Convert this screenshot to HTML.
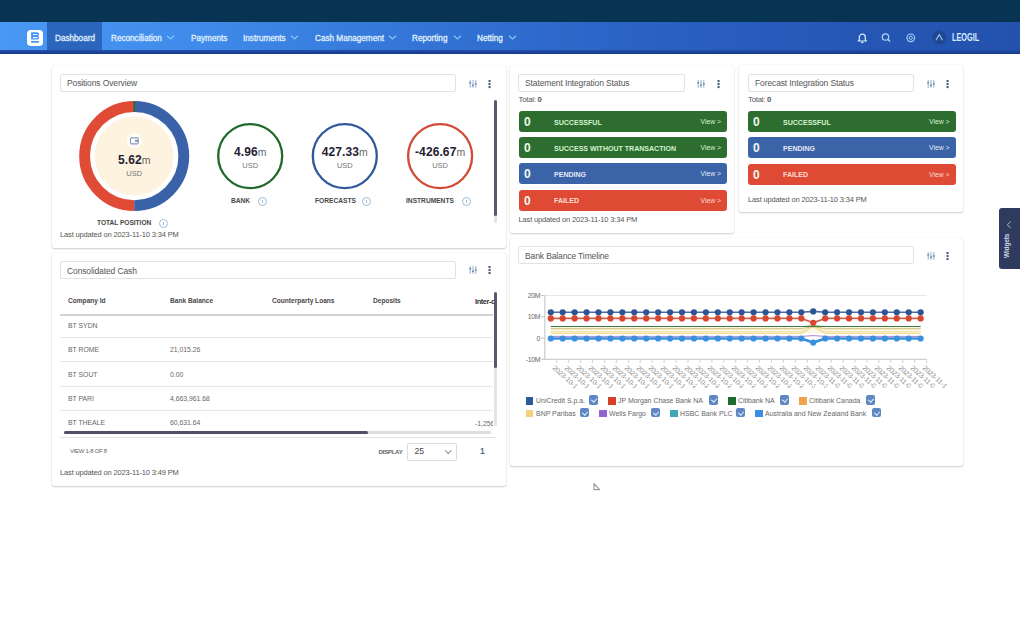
<!DOCTYPE html><html><head><meta charset="utf-8"><style>
*{box-sizing:border-box;margin:0;padding:0}
html,body{width:1020px;height:638px;overflow:hidden;background:#fff;font-family:"Liberation Sans",sans-serif;color:#333}
.abs{position:absolute;white-space:nowrap}
#topbar{position:absolute;left:0;top:0;width:1020px;height:22px;background:#073452}
#nav{position:absolute;left:0;top:22px;width:1020px;height:28px;background:linear-gradient(90deg,#4898f4 0%,#3f8aea 20%,#3171d2 45%,#2a60c2 65%,#2556b4 85%,#2352ae 100%)}
#navline{position:absolute;left:0;top:50px;width:1020px;height:3.8px;background:linear-gradient(180deg,#2350a8,#15398a)}
.nv{position:absolute;top:2px;height:28px;line-height:28px;font-size:9.5px;color:#e2f2ff;-webkit-text-stroke:0.3px #e2f2ff;white-space:nowrap;transform:scaleX(0.86);transform-origin:0 0}
.chev{position:absolute;top:11px;width:4px;height:4px;border-right:1px solid #9dc8f2;border-bottom:1px solid #9dc8f2;transform:rotate(45deg)}
.card{position:absolute;background:#fff;border-radius:2px;box-shadow:0 1px 2px rgba(0,0,0,0.18),0 0 1px rgba(0,0,0,0.16)}
.tbox{position:absolute;border:1px solid #e2e2e2;border-radius:2px;background:#fff;font-size:8.5px;color:#555;padding-left:6px;white-space:nowrap;letter-spacing:-0.12px;height:18px;line-height:16px}
.keb{position:absolute;width:2px;height:9px}
.keb i{display:block;width:2px;height:2px;background:#3b4d6b;margin-bottom:1.3px}
.bar{position:absolute;height:21px;border-radius:3px;color:#d4f3d0}
.bar .n{position:absolute;left:5px;top:1px;line-height:21px;font-size:12px;font-weight:bold;color:#eef9ee}
.bar .l{position:absolute;left:35px;top:0.5px;line-height:21px;font-size:8px;font-weight:bold;transform:scaleX(0.88);transform-origin:0 0}
.bar .v{position:absolute;right:6px;top:0;line-height:21px;font-size:6.8px}
.g{background:#2d6e30}
.b{background:#3b63a8;color:#e3e9f6}
.r{background:#de4a33;color:#fcdcd4}
.small{position:absolute;font-size:7.5px;color:#555;white-space:nowrap;letter-spacing:-0.15px}
.val{position:absolute;text-align:center;white-space:nowrap;color:#1f2233}
.val b{font-size:12px;letter-spacing:0.1px}
.val s{text-decoration:none;font-size:10.5px;color:#666}
.usd{position:absolute;font-size:7.5px;color:#777;text-align:center}
.lab{position:absolute;font-size:7.8px;font-weight:bold;color:#474747;white-space:nowrap;transform:scaleX(0.85);transform-origin:0 0;margin-top:-1.1px}
.info{position:absolute;width:9px;height:9px;margin:-0.5px 0 0 -0.5px;border:1px solid #9dbcd8;border-radius:50%}
.info:after{content:"";position:absolute;left:3px;top:2.5px;width:1px;height:3px;background:#9dbcd8}
.th{position:absolute;font-size:7.4px;font-weight:bold;color:#484848;white-space:nowrap;transform:scaleX(0.89);transform-origin:0 0}
.td{position:absolute;font-size:7.6px;color:#666;white-space:nowrap;transform:scaleX(0.9);transform-origin:0 0}
.hr{position:absolute;height:1px;background:#e6e6e6}
.leg{position:absolute;font-size:7.6px;color:#666;white-space:nowrap;transform:scaleX(0.915);transform-origin:0 0}
.sw{position:absolute;width:8px;height:8px}
.cb{position:absolute;width:9.2px;height:9.4px;border-radius:2px;background:#5e87c4}
.cb:after{content:"";position:absolute;left:3.3px;top:1.8px;width:2.6px;height:4.2px;border-right:1.6px solid #eef4ff;border-bottom:1.6px solid #eef4ff;transform:rotate(40deg)}
</style></head><body>
<div id="topbar"></div>
<div id="nav">
<div class="abs" style="left:27px;top:8px;width:16px;height:16px;background:#fff;border-radius:4px"></div>
<svg class="abs" style="left:27px;top:8px" width="16" height="16" viewBox="0 0 16 16"><path fill-rule="evenodd" fill="#4796f0" d="M4.1 2.2H10.2A1.9 1.9 0 0 1 11 5.8A2 2 0 0 1 10.2 9.6H4.1ZM6 3.9H9.7A0.6 0.6 0 0 1 9.7 5.1H6ZM6 7H10.2A0.6 0.6 0 0 1 10.2 8.2H6Z"/><rect x="4.1" y="11" width="7.9" height="1.7" fill="#4796f0"/></svg>
<div class="abs" style="left:47px;top:0;width:55px;height:28px;background:#2c66bc"></div>
<div class="nv" style="left:55px">Dashboard</div>
<div class="nv" style="left:110.5px">Reconciliation</div>
<svg class="abs" style="left:165.8px;top:13px" width="9" height="5" viewBox="0 0 9 5"><path d="M1 0.8l3.5 3.2 3.5-3.2" fill="none" stroke="#86c6f8" stroke-width="1.2"/></svg>
<div class="nv" style="left:191px">Payments</div>
<div class="nv" style="left:243px">Instruments</div>
<svg class="abs" style="left:290.3px;top:13px" width="9" height="5" viewBox="0 0 9 5"><path d="M1 0.8l3.5 3.2 3.5-3.2" fill="none" stroke="#86c6f8" stroke-width="1.2"/></svg>
<div class="nv" style="left:315px">Cash Management</div>
<svg class="abs" style="left:387.6px;top:13px" width="9" height="5" viewBox="0 0 9 5"><path d="M1 0.8l3.5 3.2 3.5-3.2" fill="none" stroke="#86c6f8" stroke-width="1.2"/></svg>
<div class="nv" style="left:412px">Reporting</div>
<svg class="abs" style="left:452.6px;top:13px" width="9" height="5" viewBox="0 0 9 5"><path d="M1 0.8l3.5 3.2 3.5-3.2" fill="none" stroke="#86c6f8" stroke-width="1.2"/></svg>
<div class="nv" style="left:477px">Netting</div>
<svg class="abs" style="left:507.8px;top:13px" width="9" height="5" viewBox="0 0 9 5"><path d="M1 0.8l3.5 3.2 3.5-3.2" fill="none" stroke="#86c6f8" stroke-width="1.2"/></svg>
<svg class="abs" style="left:855px;top:8px" width="130" height="16" viewBox="0 0 130 16"><path d="M4.3 10V7.2a3 3 0 0 1 6 0V10l1 1H3.3z" fill="none" stroke="#dcefff" stroke-width="1.2" stroke-linejoin="round"/><path d="M6.2 12.5h2.2" stroke="#dcefff" stroke-width="1.3"/><circle cx="30.5" cy="7" r="3.2" fill="none" stroke="#a9d0f5" stroke-width="1.3"/><path d="M32.8 9.3l2.2 2.2" stroke="#a9d0f5" stroke-width="1.4"/><circle cx="55.8" cy="7.8" r="3.8" fill="none" stroke="#a9d0f5" stroke-width="1.2"/><circle cx="55.8" cy="7.8" r="1.6" fill="none" stroke="#a9d0f5" stroke-width="1"/><circle cx="84.2" cy="7.6" r="7" fill="#1f4792"/><path d="M80.9 10.2l3.3-5.6 3.3 5.6" fill="none" stroke="#9cc4ec" stroke-width="1.1"/></svg>
<div class="nv" style="left:952px;top:2.3px;font-size:10.2px;font-weight:bold;transform:scaleX(0.72);color:#d9eeff;-webkit-text-stroke:0">LEOGIL</div>
</div><div id="navline"></div>
<div class="card" style="left:52px;top:66px;width:454px;height:182px"></div>
<div class="tbox" style="left:60px;top:74px;width:396px">Positions Overview</div>
<svg class="abs" style="left:468.5px;top:80px" width="8" height="8" viewBox="0 0 8 8"><g stroke="#86a4c2" stroke-width="0.9"><path d="M1.2 0v7.8M4 0v7.8M6.8 0v7.8"/></g><g fill="#6f8fb2"><rect x="0.2" y="2" width="2" height="1.5"/><rect x="3" y="4.6" width="2" height="1.5"/><rect x="5.8" y="3.2" width="2" height="1.5"/></g></svg>
<svg class="abs" style="left:488.0px;top:80px" width="3" height="9" viewBox="0 0 3 9"><g fill="#4b5f7a"><rect x="0.5" y="0" width="2.1" height="2.1"/><rect x="0.5" y="3" width="2.1" height="2.1"/><rect x="0.5" y="6" width="2.1" height="2.1"/></g></svg>
<div class="abs" style="left:494px;top:99.5px;width:3px;height:123px;background:#e4e4e8;border-radius:1.5px"></div>
<div class="abs" style="left:494px;top:99.5px;width:3px;height:116px;background:#585870;border-radius:1.5px"></div>
<svg class="abs" style="left:0;top:0" width="520" height="250" viewBox="0 0 520 250"><circle cx="134.2" cy="156.1" r="39.5" fill="#fdf3df"/><path d="M134.2 106.5 A49.6 49.6 0 0 0 134.2 205.7" fill="none" stroke="#df4b34" stroke-width="10.8"/><path d="M134.2 205.7 A49.6 49.6 0 0 0 134.2 106.5" fill="none" stroke="#3a62a8" stroke-width="10.8"/><rect x="133.39999999999998" y="101.1" width="1.8" height="10.8" fill="#2b6a3a"/><circle cx="250.2" cy="156.1" r="32" fill="none" stroke="#23692c" stroke-width="2.3"/><circle cx="344.8" cy="156.1" r="32" fill="none" stroke="#30599b" stroke-width="2.3"/><circle cx="440.1" cy="156.1" r="32" fill="none" stroke="#d14b36" stroke-width="2.3"/><circle cx="134.4" cy="140.8" r="7.5" fill="#fffdf8"/><rect x="130.5" y="137.9" width="7.8" height="6" rx="1.1" fill="#fff" stroke="#8499b8" stroke-width="1.1"/><rect x="134.9" y="139.9" width="3.4" height="2" fill="#8499b8"/></svg>
<div class="val" style="left:94.19999999999999px;width:80px;top:153px;line-height:12px"><b>5.62</b><s>m</s></div>
<div class="usd" style="left:104.2px;width:60px;top:169px">USD</div>
<div class="val" style="left:210.2px;width:80px;top:145px;line-height:12px"><b>4.96</b><s>m</s></div>
<div class="usd" style="left:220.2px;width:60px;top:161px">USD</div>
<div class="val" style="left:304.8px;width:80px;top:145px;line-height:12px"><b>427.33</b><s>m</s></div>
<div class="usd" style="left:314.8px;width:60px;top:161px">USD</div>
<div class="val" style="left:400.1px;width:80px;top:145px;line-height:12px"><b>-426.67</b><s>m</s></div>
<div class="usd" style="left:410.1px;width:60px;top:161px">USD</div>
<div class="lab" style="left:96.5px;top:219.5px;letter-spacing:-0.05px">TOTAL POSITION</div><div class="info" style="left:159.7px;top:219px"></div>
<div class="lab" style="left:231px;top:197.5px">BANK</div><div class="info" style="left:258px;top:197.3px"></div>
<div class="lab" style="left:315px;top:197.5px">FORECASTS</div><div class="info" style="left:362.2px;top:197.3px"></div>
<div class="lab" style="left:405.5px;top:197.5px">INSTRUMENTS</div><div class="info" style="left:462.2px;top:197.3px"></div>
<div class="small" style="left:60px;top:230px">Last updated on 2023-11-10 3:34 PM</div>
<div class="card" style="left:510px;top:66px;width:224px;height:167px"></div>
<div class="tbox" style="left:518px;top:74px;width:167px">Statement Integration Status</div>
<svg class="abs" style="left:697px;top:80px" width="8" height="8" viewBox="0 0 8 8"><g stroke="#86a4c2" stroke-width="0.9"><path d="M1.2 0v7.8M4 0v7.8M6.8 0v7.8"/></g><g fill="#6f8fb2"><rect x="0.2" y="2" width="2" height="1.5"/><rect x="3" y="4.6" width="2" height="1.5"/><rect x="5.8" y="3.2" width="2" height="1.5"/></g></svg>
<svg class="abs" style="left:717.0px;top:80px" width="3" height="9" viewBox="0 0 3 9"><g fill="#4b5f7a"><rect x="0.5" y="0" width="2.1" height="2.1"/><rect x="0.5" y="3" width="2.1" height="2.1"/><rect x="0.5" y="6" width="2.1" height="2.1"/></g></svg>
<div class="small" style="left:518.5px;top:95px;font-size:7.8px;letter-spacing:-0.25px">Total: <b>0</b></div>
<div class="bar g" style="left:519px;top:111.0px;width:208px"><span class="n">0</span><span class="l">SUCCESSFUL</span><span class="v">View &gt;</span></div>
<div class="bar g" style="left:519px;top:137.2px;width:208px"><span class="n">0</span><span class="l">SUCCESS WITHOUT TRANSACTION</span><span class="v">View &gt;</span></div>
<div class="bar b" style="left:519px;top:163.4px;width:208px"><span class="n">0</span><span class="l">PENDING</span><span class="v">View &gt;</span></div>
<div class="bar r" style="left:519px;top:189.6px;width:208px"><span class="n">0</span><span class="l">FAILED</span><span class="v">View &gt;</span></div>
<div class="small" style="left:518.5px;top:214.5px">Last updated on 2023-11-10 3:34 PM</div>
<div class="card" style="left:739px;top:65px;width:224px;height:147px"></div>
<div class="tbox" style="left:748px;top:74px;width:166px">Forecast Integration Status</div>
<svg class="abs" style="left:926.5px;top:80px" width="8" height="8" viewBox="0 0 8 8"><g stroke="#86a4c2" stroke-width="0.9"><path d="M1.2 0v7.8M4 0v7.8M6.8 0v7.8"/></g><g fill="#6f8fb2"><rect x="0.2" y="2" width="2" height="1.5"/><rect x="3" y="4.6" width="2" height="1.5"/><rect x="5.8" y="3.2" width="2" height="1.5"/></g></svg>
<svg class="abs" style="left:946.0px;top:80px" width="3" height="9" viewBox="0 0 3 9"><g fill="#4b5f7a"><rect x="0.5" y="0" width="2.1" height="2.1"/><rect x="0.5" y="3" width="2.1" height="2.1"/><rect x="0.5" y="6" width="2.1" height="2.1"/></g></svg>
<div class="small" style="left:748px;top:95px;font-size:7.8px;letter-spacing:-0.25px">Total: <b>0</b></div>
<div class="bar g" style="left:748px;top:111.0px;width:207.5px"><span class="n">0</span><span class="l">SUCCESSFUL</span><span class="v">View &gt;</span></div>
<div class="bar b" style="left:748px;top:137.3px;width:207.5px"><span class="n">0</span><span class="l">PENDING</span><span class="v">View &gt;</span></div>
<div class="bar r" style="left:748px;top:163.6px;width:207.5px"><span class="n">0</span><span class="l">FAILED</span><span class="v">View &gt;</span></div>
<div class="small" style="left:748px;top:194.5px">Last updated on 2023-11-10 3:34 PM</div>
<div class="card" style="left:52px;top:253px;width:454px;height:233px"></div>
<div class="tbox" style="left:60px;top:261.4px;width:396px;height:17.5px;line-height:18.2px">Consolidated Cash</div>
<svg class="abs" style="left:468.5px;top:266px" width="8" height="8" viewBox="0 0 8 8"><g stroke="#86a4c2" stroke-width="0.9"><path d="M1.2 0v7.8M4 0v7.8M6.8 0v7.8"/></g><g fill="#6f8fb2"><rect x="0.2" y="2" width="2" height="1.5"/><rect x="3" y="4.6" width="2" height="1.5"/><rect x="5.8" y="3.2" width="2" height="1.5"/></g></svg>
<svg class="abs" style="left:488.0px;top:266px" width="3" height="9" viewBox="0 0 3 9"><g fill="#4b5f7a"><rect x="0.5" y="0" width="2.1" height="2.1"/><rect x="0.5" y="3" width="2.1" height="2.1"/><rect x="0.5" y="6" width="2.1" height="2.1"/></g></svg>
<div class="th" style="left:68px;top:296px">Company Id</div>
<div class="th" style="left:170px;top:296px">Bank Balance</div>
<div class="th" style="left:271.8px;top:296px">Counterparty Loans</div>
<div class="th" style="left:373.2px;top:296px">Deposits</div>
<div class="abs" style="left:475px;top:296.5px;width:19px;overflow:hidden;font-size:7.5px;font-weight:bold;color:#333;letter-spacing:-0.45px">Inter-co</div>
<div class="abs" style="left:60px;top:313.5px;width:433px;height:2px;background:#d2d2d2"></div>
<div class="td" style="left:68px;top:321.0px">BT SYDN</div>
<div class="hr" style="left:60px;top:337.0px;width:433px"></div>
<div class="td" style="left:68px;top:345.4px">BT ROME</div>
<div class="td" style="left:170px;top:345.4px">21,015.26</div>
<div class="hr" style="left:60px;top:361.4px;width:433px"></div>
<div class="td" style="left:68px;top:369.7px">BT SOUT</div>
<div class="td" style="left:170px;top:369.7px">0.00</div>
<div class="hr" style="left:60px;top:385.7px;width:433px"></div>
<div class="td" style="left:68px;top:394.1px">BT PARI</div>
<div class="td" style="left:170px;top:394.1px">4,663,961.68</div>
<div class="hr" style="left:60px;top:410.1px;width:433px"></div>
<div class="td" style="left:68px;top:418.4px">BT THEALE</div>
<div class="td" style="left:170px;top:418.4px">60,631.64</div>
<div class="td" style="left:474.5px;top:418.5px;width:20px;overflow:hidden">-1,256.00</div>
<div class="abs" style="left:494px;top:292px;width:3px;height:134px;background:#e4e4e8;border-radius:1.5px"></div>
<div class="abs" style="left:494px;top:292px;width:3px;height:75.5px;background:#585870;border-radius:1.5px"></div>
<div class="abs" style="left:63.5px;top:430.5px;width:427px;height:3.4px;background:#dedee2;border-radius:2px"></div>
<div class="abs" style="left:63.5px;top:430.5px;width:304px;height:3.4px;background:#505068;border-radius:2px"></div>
<div class="hr" style="left:60px;top:437px;width:436px;background:#e2e2e2"></div>
<div class="abs" style="left:70px;top:447.5px;font-size:6px;color:#666;letter-spacing:-0.3px">VIEW 1-8 OF 8</div>
<div class="abs" style="left:378.4px;top:448px;font-size:6.2px;color:#666;font-weight:bold;letter-spacing:-0.3px">DISPLAY</div>
<div class="abs" style="left:407.4px;top:443.4px;width:50px;height:17.5px;border:1px solid #dcdcdc;border-radius:2px"></div>
<div class="abs" style="left:414.4px;top:446px;font-size:8.6px;color:#444">25</div>
<div class="abs" style="left:446px;top:448px;width:4.5px;height:4.5px;border-right:1px solid #888;border-bottom:1px solid #888;transform:rotate(45deg)"></div>
<div class="abs" style="left:480px;top:446px;font-size:8.8px;color:#44587c;-webkit-text-stroke:0.2px #44587c">1</div>
<div class="small" style="left:60px;top:467.5px">Last updated on 2023-11-10 3:49 PM</div>
<div class="card" style="left:510px;top:238px;width:453px;height:228px"></div>
<div class="tbox" style="left:518px;top:246.2px;width:396px;height:17.5px;line-height:18.2px">Bank Balance Timeline</div>
<svg class="abs" style="left:926.5px;top:252px" width="8" height="8" viewBox="0 0 8 8"><g stroke="#86a4c2" stroke-width="0.9"><path d="M1.2 0v7.8M4 0v7.8M6.8 0v7.8"/></g><g fill="#6f8fb2"><rect x="0.2" y="2" width="2" height="1.5"/><rect x="3" y="4.6" width="2" height="1.5"/><rect x="5.8" y="3.2" width="2" height="1.5"/></g></svg>
<svg class="abs" style="left:946.0px;top:252px" width="3" height="9" viewBox="0 0 3 9"><g fill="#4b5f7a"><rect x="0.5" y="0" width="2.1" height="2.1"/><rect x="0.5" y="3" width="2.1" height="2.1"/><rect x="0.5" y="6" width="2.1" height="2.1"/></g></svg>
<svg class="abs" style="left:0;top:0" width="1020" height="470" viewBox="0 0 1020 470"><line x1="544.8" y1="295.5" x2="926.6" y2="295.5" stroke="#e6e6e6" stroke-width="1"/><line x1="541" y1="295.5" x2="544.8" y2="295.5" stroke="#c8c8c8" stroke-width="1"/><line x1="541" y1="316.8" x2="544.8" y2="316.8" stroke="#c8c8c8" stroke-width="1"/><line x1="541" y1="338.1" x2="544.8" y2="338.1" stroke="#c8c8c8" stroke-width="1"/><line x1="541" y1="359.3" x2="544.8" y2="359.3" stroke="#c8c8c8" stroke-width="1"/><line x1="544.8" y1="295.5" x2="544.8" y2="359.3" stroke="#cfcfcf" stroke-width="1.3"/><line x1="542" y1="359.3" x2="926.6" y2="359.3" stroke="#cfcfcf" stroke-width="1.3"/><line x1="556.73" y1="359.3" x2="556.73" y2="362.8" stroke="#cfcfcf" stroke-width="1"/><line x1="568.66" y1="359.3" x2="568.66" y2="362.8" stroke="#cfcfcf" stroke-width="1"/><line x1="580.59" y1="359.3" x2="580.59" y2="362.8" stroke="#cfcfcf" stroke-width="1"/><line x1="592.52" y1="359.3" x2="592.52" y2="362.8" stroke="#cfcfcf" stroke-width="1"/><line x1="604.46" y1="359.3" x2="604.46" y2="362.8" stroke="#cfcfcf" stroke-width="1"/><line x1="616.39" y1="359.3" x2="616.39" y2="362.8" stroke="#cfcfcf" stroke-width="1"/><line x1="628.32" y1="359.3" x2="628.32" y2="362.8" stroke="#cfcfcf" stroke-width="1"/><line x1="640.25" y1="359.3" x2="640.25" y2="362.8" stroke="#cfcfcf" stroke-width="1"/><line x1="652.18" y1="359.3" x2="652.18" y2="362.8" stroke="#cfcfcf" stroke-width="1"/><line x1="664.11" y1="359.3" x2="664.11" y2="362.8" stroke="#cfcfcf" stroke-width="1"/><line x1="676.04" y1="359.3" x2="676.04" y2="362.8" stroke="#cfcfcf" stroke-width="1"/><line x1="687.97" y1="359.3" x2="687.97" y2="362.8" stroke="#cfcfcf" stroke-width="1"/><line x1="699.91" y1="359.3" x2="699.91" y2="362.8" stroke="#cfcfcf" stroke-width="1"/><line x1="711.84" y1="359.3" x2="711.84" y2="362.8" stroke="#cfcfcf" stroke-width="1"/><line x1="723.77" y1="359.3" x2="723.77" y2="362.8" stroke="#cfcfcf" stroke-width="1"/><line x1="735.70" y1="359.3" x2="735.70" y2="362.8" stroke="#cfcfcf" stroke-width="1"/><line x1="747.63" y1="359.3" x2="747.63" y2="362.8" stroke="#cfcfcf" stroke-width="1"/><line x1="759.56" y1="359.3" x2="759.56" y2="362.8" stroke="#cfcfcf" stroke-width="1"/><line x1="771.49" y1="359.3" x2="771.49" y2="362.8" stroke="#cfcfcf" stroke-width="1"/><line x1="783.42" y1="359.3" x2="783.42" y2="362.8" stroke="#cfcfcf" stroke-width="1"/><line x1="795.36" y1="359.3" x2="795.36" y2="362.8" stroke="#cfcfcf" stroke-width="1"/><line x1="807.29" y1="359.3" x2="807.29" y2="362.8" stroke="#cfcfcf" stroke-width="1"/><line x1="819.22" y1="359.3" x2="819.22" y2="362.8" stroke="#cfcfcf" stroke-width="1"/><line x1="831.15" y1="359.3" x2="831.15" y2="362.8" stroke="#cfcfcf" stroke-width="1"/><line x1="843.08" y1="359.3" x2="843.08" y2="362.8" stroke="#cfcfcf" stroke-width="1"/><line x1="855.01" y1="359.3" x2="855.01" y2="362.8" stroke="#cfcfcf" stroke-width="1"/><line x1="866.94" y1="359.3" x2="866.94" y2="362.8" stroke="#cfcfcf" stroke-width="1"/><line x1="878.88" y1="359.3" x2="878.88" y2="362.8" stroke="#cfcfcf" stroke-width="1"/><line x1="890.81" y1="359.3" x2="890.81" y2="362.8" stroke="#cfcfcf" stroke-width="1"/><line x1="902.74" y1="359.3" x2="902.74" y2="362.8" stroke="#cfcfcf" stroke-width="1"/><line x1="914.67" y1="359.3" x2="914.67" y2="362.8" stroke="#cfcfcf" stroke-width="1"/><line x1="926.60" y1="359.3" x2="926.60" y2="362.8" stroke="#cfcfcf" stroke-width="1"/><rect x="550.77" y="327" width="369.87" height="6.5" fill="#fbf6e4"/><path d="M550.77 333.30 L562.70 333.30 L574.63 333.30 L586.56 333.30 L598.49 333.30 L610.42 333.30 L622.35 333.30 L634.28 333.30 L646.22 333.30 L658.15 333.30 L670.08 333.30 L682.01 333.30 L693.94 333.30 L705.87 333.30 L717.80 333.30 L729.73 333.30 L741.67 333.30 L753.60 333.30 L765.53 333.30 L777.46 333.30 L789.39 333.30 L801.32 333.30 L813.25 326.80 L825.18 333.30 L837.12 333.30 L849.05 333.30 L860.98 333.30 L872.91 333.30 L884.84 333.30 L896.77 333.30 L908.70 333.30 L920.63 333.30" fill="none" stroke="#f3dc92" stroke-width="1.2"/><path d="M550.77 331.60 L562.70 331.60 L574.63 331.60 L586.56 331.60 L598.49 331.60 L610.42 331.60 L622.35 331.60 L634.28 331.60 L646.22 331.60 L658.15 331.60 L670.08 331.60 L682.01 331.60 L693.94 331.60 L705.87 331.60 L717.80 331.60 L729.73 331.60 L741.67 331.60 L753.60 331.60 L765.53 331.60 L777.46 331.60 L789.39 331.60 L801.32 331.60 L813.25 326.80 L825.18 331.60 L837.12 331.60 L849.05 331.60 L860.98 331.60 L872.91 331.60 L884.84 331.60 L896.77 331.60 L908.70 331.60 L920.63 331.60" fill="none" stroke="#f5e4a8" stroke-width="1.0"/><path d="M550.77 328.60 L562.70 328.60 L574.63 328.60 L586.56 328.60 L598.49 328.60 L610.42 328.60 L622.35 328.60 L634.28 328.60 L646.22 328.60 L658.15 328.60 L670.08 328.60 L682.01 328.60 L693.94 328.60 L705.87 328.60 L717.80 328.60 L729.73 328.60 L741.67 328.60 L753.60 328.60 L765.53 328.60 L777.46 328.60 L789.39 328.60 L801.32 328.60 L813.25 326.60 L825.18 328.60 L837.12 328.60 L849.05 328.60 L860.98 328.60 L872.91 328.60 L884.84 328.60 L896.77 328.60 L908.70 328.60 L920.63 328.60" fill="none" stroke="#d6c88e" stroke-width="1.2"/><path d="M550.77 326.50 L562.70 326.50 L574.63 326.50 L586.56 326.50 L598.49 326.50 L610.42 326.50 L622.35 326.50 L634.28 326.50 L646.22 326.50 L658.15 326.50 L670.08 326.50 L682.01 326.50 L693.94 326.50 L705.87 326.50 L717.80 326.50 L729.73 326.50 L741.67 326.50 L753.60 326.50 L765.53 326.50 L777.46 326.50 L789.39 326.50 L801.32 326.50 L813.25 326.20 L825.18 326.50 L837.12 326.50 L849.05 326.50 L860.98 326.50 L872.91 326.50 L884.84 326.50 L896.77 326.50 L908.70 326.50 L920.63 326.50" fill="none" stroke="#3f7d43" stroke-width="1.2"/><path d="M550.77 336.40 L562.70 336.40 L574.63 336.40 L586.56 336.40 L598.49 336.40 L610.42 336.40 L622.35 336.40 L634.28 336.40 L646.22 336.40 L658.15 336.40 L670.08 336.40 L682.01 336.40 L693.94 336.40 L705.87 336.40 L717.80 336.40 L729.73 336.40 L741.67 336.40 L753.60 336.40 L765.53 336.40 L777.46 336.40 L789.39 336.40 L801.32 336.40 L813.25 335.60 L825.18 336.40 L837.12 336.40 L849.05 336.40 L860.98 336.40 L872.91 336.40 L884.84 336.40 L896.77 336.40 L908.70 336.40 L920.63 336.40" fill="none" stroke="#a883d8" stroke-width="1.0"/><path d="M550.77 338.50 L562.70 338.50 L574.63 338.50 L586.56 338.50 L598.49 338.50 L610.42 338.50 L622.35 338.50 L634.28 338.50 L646.22 338.50 L658.15 338.50 L670.08 338.50 L682.01 338.50 L693.94 338.50 L705.87 338.50 L717.80 338.50 L729.73 338.50 L741.67 338.50 L753.60 338.50 L765.53 338.50 L777.46 338.50 L789.39 338.50 L801.32 338.50 L813.25 342.60 L825.18 338.50 L837.12 338.50 L849.05 338.50 L860.98 338.50 L872.91 338.50 L884.84 338.50 L896.77 338.50 L908.70 338.50 L920.63 338.50" fill="none" stroke="#3b8fdc" stroke-width="2.6"/><circle cx="550.77" cy="338.50" r="3.1" fill="#3b90dd"/><circle cx="562.70" cy="338.50" r="3.1" fill="#3b90dd"/><circle cx="574.63" cy="338.50" r="3.1" fill="#3b90dd"/><circle cx="586.56" cy="338.50" r="3.1" fill="#3b90dd"/><circle cx="598.49" cy="338.50" r="3.1" fill="#3b90dd"/><circle cx="610.42" cy="338.50" r="3.1" fill="#3b90dd"/><circle cx="622.35" cy="338.50" r="3.1" fill="#3b90dd"/><circle cx="634.28" cy="338.50" r="3.1" fill="#3b90dd"/><circle cx="646.22" cy="338.50" r="3.1" fill="#3b90dd"/><circle cx="658.15" cy="338.50" r="3.1" fill="#3b90dd"/><circle cx="670.08" cy="338.50" r="3.1" fill="#3b90dd"/><circle cx="682.01" cy="338.50" r="3.1" fill="#3b90dd"/><circle cx="693.94" cy="338.50" r="3.1" fill="#3b90dd"/><circle cx="705.87" cy="338.50" r="3.1" fill="#3b90dd"/><circle cx="717.80" cy="338.50" r="3.1" fill="#3b90dd"/><circle cx="729.73" cy="338.50" r="3.1" fill="#3b90dd"/><circle cx="741.67" cy="338.50" r="3.1" fill="#3b90dd"/><circle cx="753.60" cy="338.50" r="3.1" fill="#3b90dd"/><circle cx="765.53" cy="338.50" r="3.1" fill="#3b90dd"/><circle cx="777.46" cy="338.50" r="3.1" fill="#3b90dd"/><circle cx="789.39" cy="338.50" r="3.1" fill="#3b90dd"/><circle cx="801.32" cy="338.50" r="3.1" fill="#3b90dd"/><circle cx="813.25" cy="342.60" r="3.1" fill="#3b90dd"/><circle cx="825.18" cy="338.50" r="3.1" fill="#3b90dd"/><circle cx="837.12" cy="338.50" r="3.1" fill="#3b90dd"/><circle cx="849.05" cy="338.50" r="3.1" fill="#3b90dd"/><circle cx="860.98" cy="338.50" r="3.1" fill="#3b90dd"/><circle cx="872.91" cy="338.50" r="3.1" fill="#3b90dd"/><circle cx="884.84" cy="338.50" r="3.1" fill="#3b90dd"/><circle cx="896.77" cy="338.50" r="3.1" fill="#3b90dd"/><circle cx="908.70" cy="338.50" r="3.1" fill="#3b90dd"/><circle cx="920.63" cy="338.50" r="3.1" fill="#3b90dd"/><path d="M550.77 312.30 L562.70 312.30 L574.63 312.30 L586.56 312.30 L598.49 312.30 L610.42 312.30 L622.35 312.30 L634.28 312.30 L646.22 312.30 L658.15 312.30 L670.08 312.30 L682.01 312.30 L693.94 312.30 L705.87 312.30 L717.80 312.30 L729.73 312.30 L741.67 312.30 L753.60 312.30 L765.53 312.30 L777.46 312.30 L789.39 312.30 L801.32 312.30 L813.25 311.40 L825.18 312.30 L837.12 312.30 L849.05 312.30 L860.98 312.30 L872.91 312.30 L884.84 312.30 L896.77 312.30 L908.70 312.30 L920.63 312.30" fill="none" stroke="#4c6aa3" stroke-width="1.6"/><circle cx="550.77" cy="312.30" r="3.1" fill="#2e5593"/><circle cx="562.70" cy="312.30" r="3.1" fill="#2e5593"/><circle cx="574.63" cy="312.30" r="3.1" fill="#2e5593"/><circle cx="586.56" cy="312.30" r="3.1" fill="#2e5593"/><circle cx="598.49" cy="312.30" r="3.1" fill="#2e5593"/><circle cx="610.42" cy="312.30" r="3.1" fill="#2e5593"/><circle cx="622.35" cy="312.30" r="3.1" fill="#2e5593"/><circle cx="634.28" cy="312.30" r="3.1" fill="#2e5593"/><circle cx="646.22" cy="312.30" r="3.1" fill="#2e5593"/><circle cx="658.15" cy="312.30" r="3.1" fill="#2e5593"/><circle cx="670.08" cy="312.30" r="3.1" fill="#2e5593"/><circle cx="682.01" cy="312.30" r="3.1" fill="#2e5593"/><circle cx="693.94" cy="312.30" r="3.1" fill="#2e5593"/><circle cx="705.87" cy="312.30" r="3.1" fill="#2e5593"/><circle cx="717.80" cy="312.30" r="3.1" fill="#2e5593"/><circle cx="729.73" cy="312.30" r="3.1" fill="#2e5593"/><circle cx="741.67" cy="312.30" r="3.1" fill="#2e5593"/><circle cx="753.60" cy="312.30" r="3.1" fill="#2e5593"/><circle cx="765.53" cy="312.30" r="3.1" fill="#2e5593"/><circle cx="777.46" cy="312.30" r="3.1" fill="#2e5593"/><circle cx="789.39" cy="312.30" r="3.1" fill="#2e5593"/><circle cx="801.32" cy="312.30" r="3.1" fill="#2e5593"/><circle cx="813.25" cy="311.40" r="3.1" fill="#2e5593"/><circle cx="825.18" cy="312.30" r="3.1" fill="#2e5593"/><circle cx="837.12" cy="312.30" r="3.1" fill="#2e5593"/><circle cx="849.05" cy="312.30" r="3.1" fill="#2e5593"/><circle cx="860.98" cy="312.30" r="3.1" fill="#2e5593"/><circle cx="872.91" cy="312.30" r="3.1" fill="#2e5593"/><circle cx="884.84" cy="312.30" r="3.1" fill="#2e5593"/><circle cx="896.77" cy="312.30" r="3.1" fill="#2e5593"/><circle cx="908.70" cy="312.30" r="3.1" fill="#2e5593"/><circle cx="920.63" cy="312.30" r="3.1" fill="#2e5593"/><path d="M550.77 318.40 L562.70 318.40 L574.63 318.40 L586.56 318.40 L598.49 318.40 L610.42 318.40 L622.35 318.40 L634.28 318.40 L646.22 318.40 L658.15 318.40 L670.08 318.40 L682.01 318.40 L693.94 318.40 L705.87 318.40 L717.80 318.40 L729.73 318.40 L741.67 318.40 L753.60 318.40 L765.53 318.40 L777.46 318.40 L789.39 318.40 L801.32 318.40 L813.25 322.80 L825.18 318.40 L837.12 318.40 L849.05 318.40 L860.98 318.40 L872.91 318.40 L884.84 318.40 L896.77 318.40 L908.70 318.40 L920.63 318.40" fill="none" stroke="#c96450" stroke-width="1.6"/><circle cx="550.77" cy="318.40" r="3.1" fill="#d9452d"/><circle cx="562.70" cy="318.40" r="3.1" fill="#d9452d"/><circle cx="574.63" cy="318.40" r="3.1" fill="#d9452d"/><circle cx="586.56" cy="318.40" r="3.1" fill="#d9452d"/><circle cx="598.49" cy="318.40" r="3.1" fill="#d9452d"/><circle cx="610.42" cy="318.40" r="3.1" fill="#d9452d"/><circle cx="622.35" cy="318.40" r="3.1" fill="#d9452d"/><circle cx="634.28" cy="318.40" r="3.1" fill="#d9452d"/><circle cx="646.22" cy="318.40" r="3.1" fill="#d9452d"/><circle cx="658.15" cy="318.40" r="3.1" fill="#d9452d"/><circle cx="670.08" cy="318.40" r="3.1" fill="#d9452d"/><circle cx="682.01" cy="318.40" r="3.1" fill="#d9452d"/><circle cx="693.94" cy="318.40" r="3.1" fill="#d9452d"/><circle cx="705.87" cy="318.40" r="3.1" fill="#d9452d"/><circle cx="717.80" cy="318.40" r="3.1" fill="#d9452d"/><circle cx="729.73" cy="318.40" r="3.1" fill="#d9452d"/><circle cx="741.67" cy="318.40" r="3.1" fill="#d9452d"/><circle cx="753.60" cy="318.40" r="3.1" fill="#d9452d"/><circle cx="765.53" cy="318.40" r="3.1" fill="#d9452d"/><circle cx="777.46" cy="318.40" r="3.1" fill="#d9452d"/><circle cx="789.39" cy="318.40" r="3.1" fill="#d9452d"/><circle cx="801.32" cy="318.40" r="3.1" fill="#d9452d"/><circle cx="813.25" cy="322.80" r="3.1" fill="#d9452d"/><circle cx="825.18" cy="318.40" r="3.1" fill="#d9452d"/><circle cx="837.12" cy="318.40" r="3.1" fill="#d9452d"/><circle cx="849.05" cy="318.40" r="3.1" fill="#d9452d"/><circle cx="860.98" cy="318.40" r="3.1" fill="#d9452d"/><circle cx="872.91" cy="318.40" r="3.1" fill="#d9452d"/><circle cx="884.84" cy="318.40" r="3.1" fill="#d9452d"/><circle cx="896.77" cy="318.40" r="3.1" fill="#d9452d"/><circle cx="908.70" cy="318.40" r="3.1" fill="#d9452d"/><circle cx="920.63" cy="318.40" r="3.1" fill="#d9452d"/></svg>
<div class="abs" style="left:500px;width:40px;text-align:right;top:291.0px;font-size:6.8px;color:#666;letter-spacing:-0.3px;line-height:9px">20M</div>
<div class="abs" style="left:500px;width:40px;text-align:right;top:312.3px;font-size:6.8px;color:#666;letter-spacing:-0.3px;line-height:9px">10M</div>
<div class="abs" style="left:500px;width:40px;text-align:right;top:333.6px;font-size:6.8px;color:#666;letter-spacing:-0.3px;line-height:9px">0</div>
<div class="abs" style="left:500px;width:40px;text-align:right;top:354.8px;font-size:6.8px;color:#666;letter-spacing:-0.3px;line-height:9px">-10M</div>
<div class="abs" style="left:556.27px;top:364px;width:30px;overflow:hidden;font-size:7px;color:#8a8a8a;line-height:8px;transform:rotate(42deg);transform-origin:0 0;letter-spacing:-0.1px">2023-10-10</div>
<div class="abs" style="left:568.20px;top:364px;width:30px;overflow:hidden;font-size:7px;color:#8a8a8a;line-height:8px;transform:rotate(42deg);transform-origin:0 0;letter-spacing:-0.1px">2023-10-11</div>
<div class="abs" style="left:580.13px;top:364px;width:30px;overflow:hidden;font-size:7px;color:#8a8a8a;line-height:8px;transform:rotate(42deg);transform-origin:0 0;letter-spacing:-0.1px">2023-10-12</div>
<div class="abs" style="left:592.06px;top:364px;width:30px;overflow:hidden;font-size:7px;color:#8a8a8a;line-height:8px;transform:rotate(42deg);transform-origin:0 0;letter-spacing:-0.1px">2023-10-13</div>
<div class="abs" style="left:603.99px;top:364px;width:30px;overflow:hidden;font-size:7px;color:#8a8a8a;line-height:8px;transform:rotate(42deg);transform-origin:0 0;letter-spacing:-0.1px">2023-10-14</div>
<div class="abs" style="left:615.92px;top:364px;width:30px;overflow:hidden;font-size:7px;color:#8a8a8a;line-height:8px;transform:rotate(42deg);transform-origin:0 0;letter-spacing:-0.1px">2023-10-15</div>
<div class="abs" style="left:627.85px;top:364px;width:30px;overflow:hidden;font-size:7px;color:#8a8a8a;line-height:8px;transform:rotate(42deg);transform-origin:0 0;letter-spacing:-0.1px">2023-10-16</div>
<div class="abs" style="left:639.78px;top:364px;width:30px;overflow:hidden;font-size:7px;color:#8a8a8a;line-height:8px;transform:rotate(42deg);transform-origin:0 0;letter-spacing:-0.1px">2023-10-17</div>
<div class="abs" style="left:651.72px;top:364px;width:30px;overflow:hidden;font-size:7px;color:#8a8a8a;line-height:8px;transform:rotate(42deg);transform-origin:0 0;letter-spacing:-0.1px">2023-10-18</div>
<div class="abs" style="left:663.65px;top:364px;width:30px;overflow:hidden;font-size:7px;color:#8a8a8a;line-height:8px;transform:rotate(42deg);transform-origin:0 0;letter-spacing:-0.1px">2023-10-19</div>
<div class="abs" style="left:675.58px;top:364px;width:30px;overflow:hidden;font-size:7px;color:#8a8a8a;line-height:8px;transform:rotate(42deg);transform-origin:0 0;letter-spacing:-0.1px">2023-10-20</div>
<div class="abs" style="left:687.51px;top:364px;width:30px;overflow:hidden;font-size:7px;color:#8a8a8a;line-height:8px;transform:rotate(42deg);transform-origin:0 0;letter-spacing:-0.1px">2023-10-21</div>
<div class="abs" style="left:699.44px;top:364px;width:30px;overflow:hidden;font-size:7px;color:#8a8a8a;line-height:8px;transform:rotate(42deg);transform-origin:0 0;letter-spacing:-0.1px">2023-10-22</div>
<div class="abs" style="left:711.37px;top:364px;width:30px;overflow:hidden;font-size:7px;color:#8a8a8a;line-height:8px;transform:rotate(42deg);transform-origin:0 0;letter-spacing:-0.1px">2023-10-23</div>
<div class="abs" style="left:723.30px;top:364px;width:30px;overflow:hidden;font-size:7px;color:#8a8a8a;line-height:8px;transform:rotate(42deg);transform-origin:0 0;letter-spacing:-0.1px">2023-10-24</div>
<div class="abs" style="left:735.23px;top:364px;width:30px;overflow:hidden;font-size:7px;color:#8a8a8a;line-height:8px;transform:rotate(42deg);transform-origin:0 0;letter-spacing:-0.1px">2023-10-25</div>
<div class="abs" style="left:747.17px;top:364px;width:30px;overflow:hidden;font-size:7px;color:#8a8a8a;line-height:8px;transform:rotate(42deg);transform-origin:0 0;letter-spacing:-0.1px">2023-10-26</div>
<div class="abs" style="left:759.10px;top:364px;width:30px;overflow:hidden;font-size:7px;color:#8a8a8a;line-height:8px;transform:rotate(42deg);transform-origin:0 0;letter-spacing:-0.1px">2023-10-27</div>
<div class="abs" style="left:771.03px;top:364px;width:30px;overflow:hidden;font-size:7px;color:#8a8a8a;line-height:8px;transform:rotate(42deg);transform-origin:0 0;letter-spacing:-0.1px">2023-10-28</div>
<div class="abs" style="left:782.96px;top:364px;width:30px;overflow:hidden;font-size:7px;color:#8a8a8a;line-height:8px;transform:rotate(42deg);transform-origin:0 0;letter-spacing:-0.1px">2023-10-29</div>
<div class="abs" style="left:794.89px;top:364px;width:30px;overflow:hidden;font-size:7px;color:#8a8a8a;line-height:8px;transform:rotate(42deg);transform-origin:0 0;letter-spacing:-0.1px">2023-10-30</div>
<div class="abs" style="left:806.82px;top:364px;width:30px;overflow:hidden;font-size:7px;color:#8a8a8a;line-height:8px;transform:rotate(42deg);transform-origin:0 0;letter-spacing:-0.1px">2023-10-31</div>
<div class="abs" style="left:818.75px;top:364px;width:30px;overflow:hidden;font-size:7px;color:#8a8a8a;line-height:8px;transform:rotate(42deg);transform-origin:0 0;letter-spacing:-0.1px">2023-11-01</div>
<div class="abs" style="left:830.68px;top:364px;width:30px;overflow:hidden;font-size:7px;color:#8a8a8a;line-height:8px;transform:rotate(42deg);transform-origin:0 0;letter-spacing:-0.1px">2023-11-02</div>
<div class="abs" style="left:842.62px;top:364px;width:30px;overflow:hidden;font-size:7px;color:#8a8a8a;line-height:8px;transform:rotate(42deg);transform-origin:0 0;letter-spacing:-0.1px">2023-11-03</div>
<div class="abs" style="left:854.55px;top:364px;width:30px;overflow:hidden;font-size:7px;color:#8a8a8a;line-height:8px;transform:rotate(42deg);transform-origin:0 0;letter-spacing:-0.1px">2023-11-04</div>
<div class="abs" style="left:866.48px;top:364px;width:30px;overflow:hidden;font-size:7px;color:#8a8a8a;line-height:8px;transform:rotate(42deg);transform-origin:0 0;letter-spacing:-0.1px">2023-11-05</div>
<div class="abs" style="left:878.41px;top:364px;width:30px;overflow:hidden;font-size:7px;color:#8a8a8a;line-height:8px;transform:rotate(42deg);transform-origin:0 0;letter-spacing:-0.1px">2023-11-06</div>
<div class="abs" style="left:890.34px;top:364px;width:30px;overflow:hidden;font-size:7px;color:#8a8a8a;line-height:8px;transform:rotate(42deg);transform-origin:0 0;letter-spacing:-0.1px">2023-11-07</div>
<div class="abs" style="left:902.27px;top:364px;width:30px;overflow:hidden;font-size:7px;color:#8a8a8a;line-height:8px;transform:rotate(42deg);transform-origin:0 0;letter-spacing:-0.1px">2023-11-08</div>
<div class="abs" style="left:914.20px;top:364px;width:30px;overflow:hidden;font-size:7px;color:#8a8a8a;line-height:8px;transform:rotate(42deg);transform-origin:0 0;letter-spacing:-0.1px">2023-11-09</div>
<div class="abs" style="left:926.13px;top:364px;width:30px;overflow:hidden;font-size:7px;color:#8a8a8a;line-height:8px;transform:rotate(42deg);transform-origin:0 0;letter-spacing:-0.1px">2023-11-10</div>
<div class="sw" style="left:525.8px;top:397.2px;width:7.6px;height:7.6px;background:#2f5a9a"></div>
<div class="leg" style="left:535.8px;top:396px;line-height:10px">UniCredit S.p.a.</div>
<div class="cb" style="left:588.8px;top:395.4px"></div>
<div class="sw" style="left:608.4px;top:397.2px;width:7.6px;height:7.6px;background:#d9402a"></div>
<div class="leg" style="left:618.4px;top:396px;line-height:10px">JP Morgan Chase Bank NA</div>
<div class="cb" style="left:708.5px;top:395.4px"></div>
<div class="sw" style="left:728px;top:397.2px;width:7.6px;height:7.6px;background:#1e6b30"></div>
<div class="leg" style="left:738px;top:396px;line-height:10px">Citibank NA</div>
<div class="cb" style="left:779.6px;top:395.4px"></div>
<div class="sw" style="left:799.4px;top:397.2px;width:7.6px;height:7.6px;background:#f0a452"></div>
<div class="leg" style="left:809.4px;top:396px;line-height:10px">Citibank Canada</div>
<div class="cb" style="left:865.6px;top:395.4px"></div>
<div class="sw" style="left:525.8px;top:409.7px;width:7.6px;height:7.6px;background:#f4d27a"></div>
<div class="leg" style="left:535.8px;top:408.5px;line-height:10px">BNP Paribas</div>
<div class="cb" style="left:579.7px;top:407.9px"></div>
<div class="sw" style="left:599px;top:409.7px;width:7.6px;height:7.6px;background:#9464d2"></div>
<div class="leg" style="left:609px;top:408.5px;line-height:10px">Wells Fargo</div>
<div class="cb" style="left:650.9px;top:407.9px"></div>
<div class="sw" style="left:670.3px;top:409.7px;width:7.6px;height:7.6px;background:#42a6b4"></div>
<div class="leg" style="left:680.3px;top:408.5px;line-height:10px">HSBC Bank PLC</div>
<div class="cb" style="left:735.9px;top:407.9px"></div>
<div class="sw" style="left:755.3px;top:409.7px;width:7.6px;height:7.6px;background:#3a90e0"></div>
<div class="leg" style="left:765.3px;top:408.5px;line-height:10px">Australia and New Zealand Bank</div>
<div class="cb" style="left:872px;top:407.9px"></div>
<div class="abs" style="left:999px;top:208px;width:22px;height:61px;background:#2f3b5e;border-radius:3px 0 0 3px"></div>
<svg class="abs" style="left:1005px;top:220px" width="8" height="10" viewBox="0 0 8 10"><path d="M5.6 1.4L2.4 4.8l3.2 3.4" fill="none" stroke="#b6bfd4" stroke-width="0.9"/></svg>
<div class="abs" style="left:1003px;top:257.8px;font-size:6.6px;font-weight:bold;color:#cdd4e4;transform:rotate(-90deg);transform-origin:0 0;letter-spacing:-0.2px">Widgets</div>
<svg class="abs" style="left:590px;top:480px" width="14" height="13" viewBox="0 0 14 13"><path d="M4 3.6V9.6H9.6Z" fill="#fff" stroke="#999" stroke-width="1.15" stroke-linejoin="round"/></svg>
</body></html>
